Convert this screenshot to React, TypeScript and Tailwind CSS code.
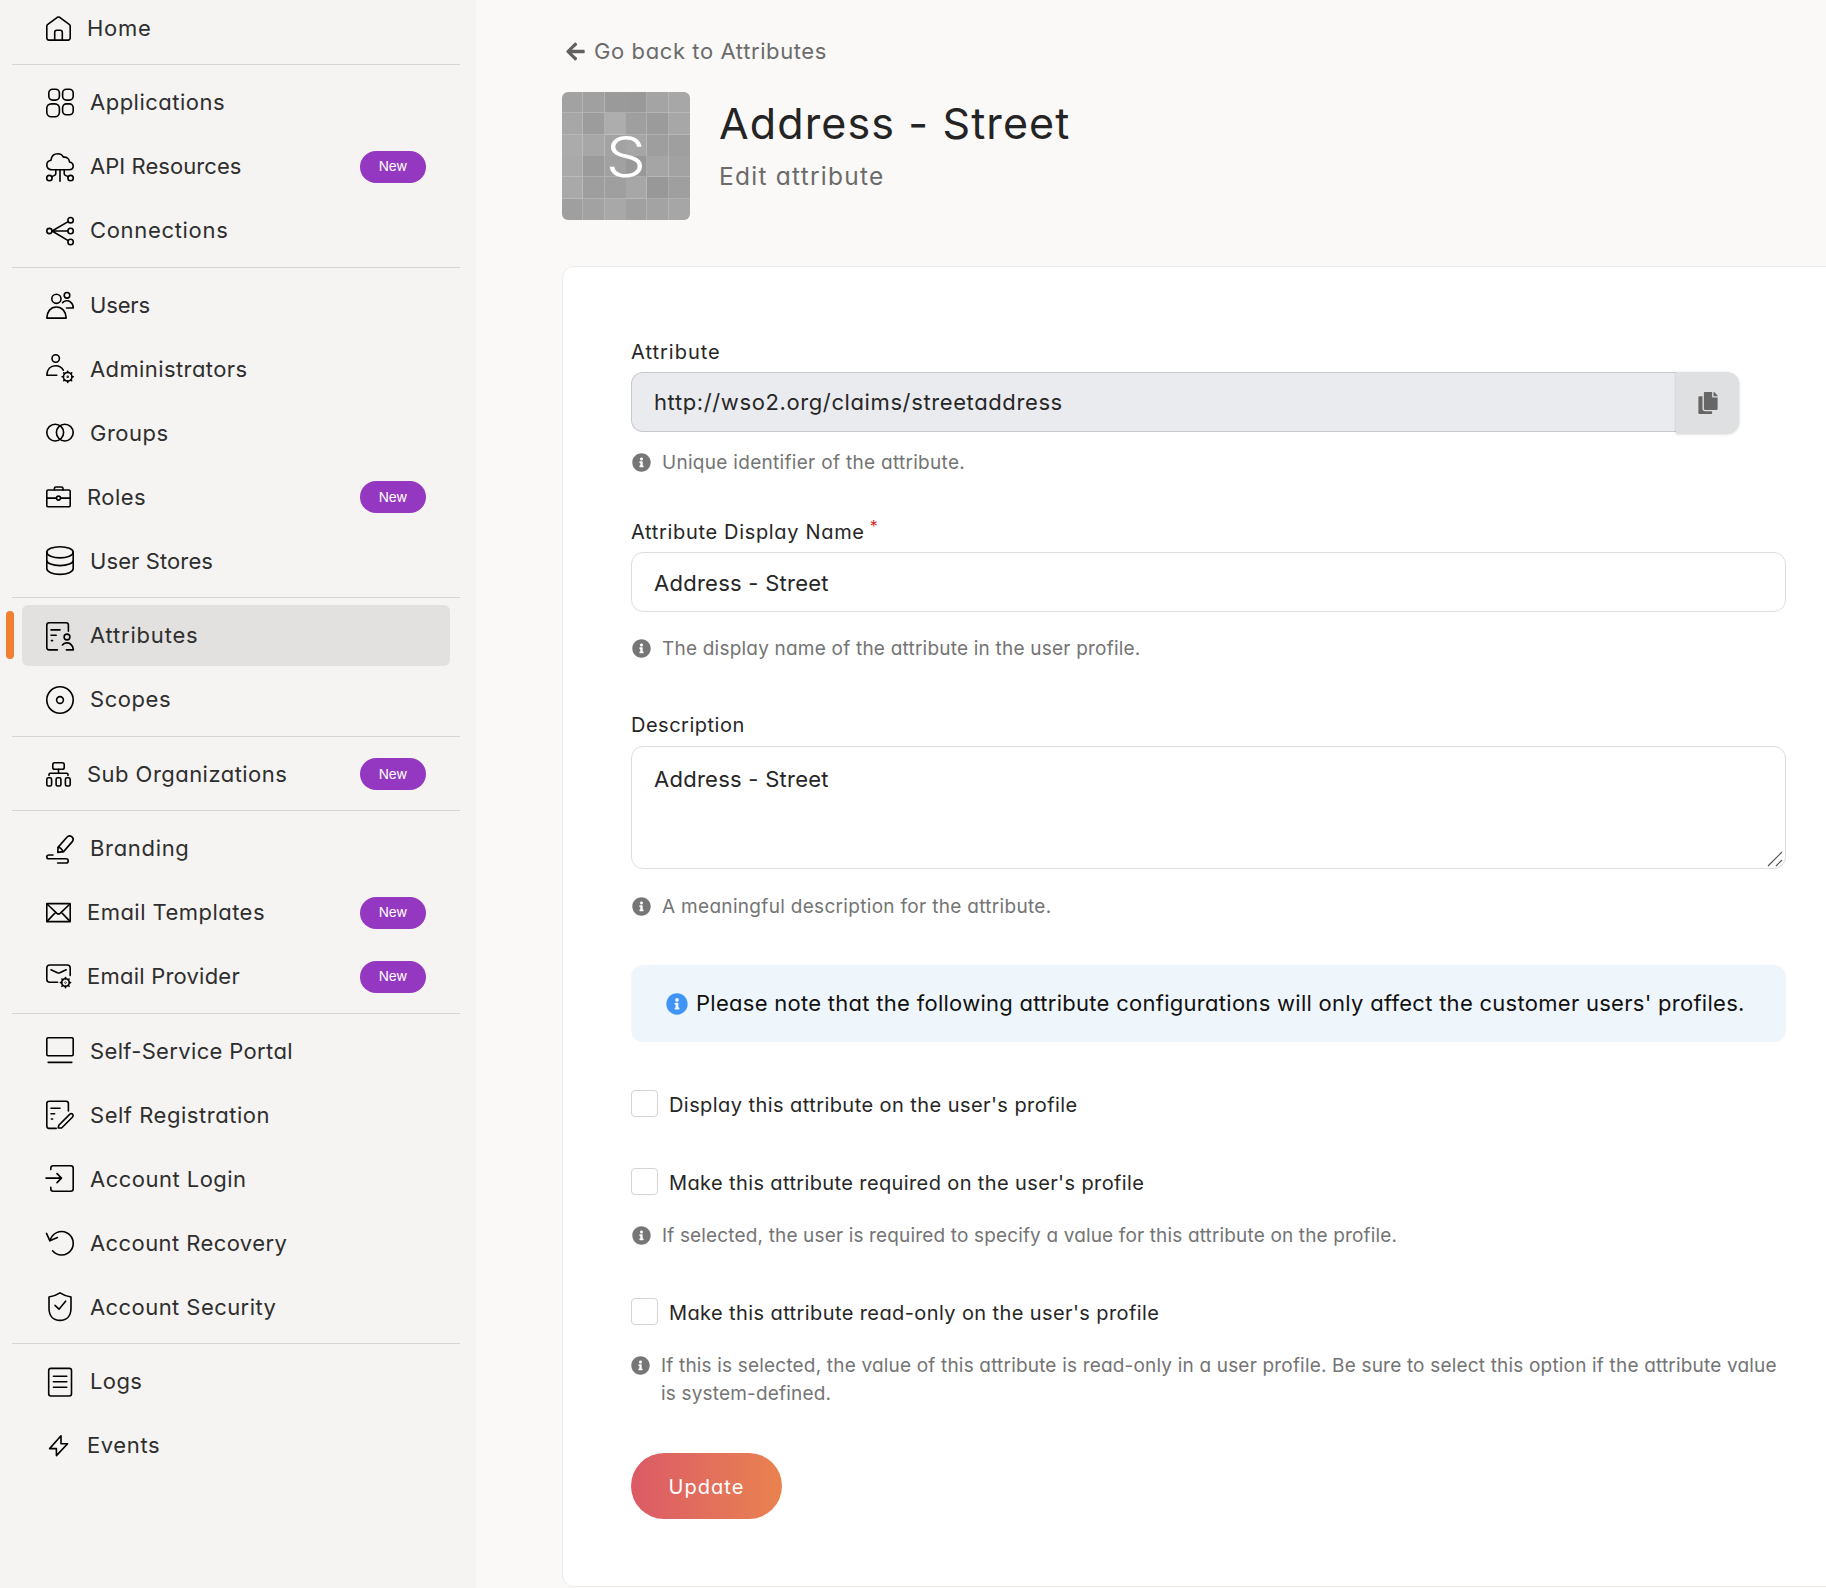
import React from "react";
import { FaArrowLeft, FaCopy, FaInfoCircle } from "react-icons/fa";

const gearTeeth = (cx: number, cy: number, r: number) =>
  [0, 45, 90, 135, 180, 225, 270, 315].map((a) => {
    const c = Math.cos((a * Math.PI) / 180);
    const s = Math.sin((a * Math.PI) / 180);
    return <path key={a} d={`M${cx + c * r} ${cy + s * r}L${cx + c * (r + 1.3)} ${cy + s * (r + 1.3)}`} />;
  });

const icons: Record<string, React.ReactNode> = {
  home: (
    <>
      <path d="M.8 10.2Q.8 9 1.8 8.3L11.3 1.3Q12.5.6 13.7 1.3L23.2 8.3Q24.2 9 24.2 10.2V21.8Q24.2 24.1 21.9 24.1H3.1Q.8 24.1.8 21.8Z" />
      <path d="M8.7 24V16.4Q8.7 14.3 10.8 14.3H14.2Q16.3 14.3 16.3 16.4V24" />
    </>
  ),
  apps: (
    <>
      <rect x="2.8" y=".3" width="10.6" height="10.8" rx="3.8" />
      <rect x="16.6" y=".3" width="10.6" height="10.8" rx="3.8" />
      <rect x=".8" y="14.9" width="12.6" height="12.8" rx="4.4" />
      <rect x="16.6" y="14.9" width="10.6" height="10.8" rx="3.8" />
    </>
  ),
  api: (
    <>
      <path d="M5.6 16.8C2.4 16.8.8 14.6.8 12.1C.8 9.4 2.5 7.6 5 7.2C5.4 3.3 8 .8 11.9.8C14.6.8 16.4 2 17.4 4.2C21 3.8 23.2 5.8 23.5 9C26 9.5 27.2 11 27.2 13C27.2 15.3 25.6 16.8 23 16.8Z" />
      <path d="M14 17V28.2M9.8 17V20.5Q9.8 22 8.4 22.4L6 23.6M18.2 17V20.5Q18.2 22 19.6 22.4L22 23.6" />
      <circle cx="3.4" cy="25.1" r="2.7" />
      <circle cx="24.6" cy="25.1" r="2.7" />
    </>
  ),
  connections: (
    <>
      <circle cx="3.4" cy="14" r="2.6" />
      <circle cx="24.6" cy="3.2" r="2.7" />
      <circle cx="24.6" cy="14" r="2.7" />
      <circle cx="24.6" cy="25" r="2.7" />
      <path d="M6 14H21.8M6.5 13.8L22.2 4.6M6.5 14.3L22.2 23.6" />
    </>
  ),
  users: (
    <>
      <circle cx="10.4" cy="7.8" r="4.6" />
      <path d="M.8 27.1C1 20.6 4.6 16 10.4 16S20 20.6 20.2 27.1Z" />
      <circle cx="21" cy="4.3" r="2.8" />
      <path d="M16.6 11.6C18.5 9.6 22 9 24.3 10.8C26.3 12.3 27.3 14.6 27.3 17H20.5" />
    </>
  ),
  admins: (
    <>
      <circle cx="9.7" cy="3.5" r="3.7" />
      <path d="M10.8 20.2H.8C1 14.6 4.4 10.8 9.6 10.8C13 10.8 15.8 12.3 17.3 15.2" />
      <circle cx="21.7" cy="21.8" r="4.3" />
      {gearTeeth(21.7, 21.8, 4.3)}
      <circle cx="21.7" cy="21.8" r=".4" />
    </>
  ),
  groups: (
    <>
      <circle cx="9.2" cy="13.6" r="8.4" />
      <circle cx="18.8" cy="13.6" r="8.4" />
    </>
  ),
  roles: (
    <>
      <rect x=".8" y="5" width="23.4" height="16.8" rx="1.4" />
      <path d="M8.4 5V3.5Q8.4 2 9.9 2H15.5Q17 2 17 3.5V5M.8 13.1H10.4M14.6 13.1H24.2" />
      <circle cx="12.5" cy="13.1" r="2" />
    </>
  ),
  stores: (
    <>
      <ellipse cx="14" cy="5.3" rx="13.2" ry="5.6" />
      <path d="M.8 5.3V21.6C.8 24.9 6.6 27.4 14 27.4S27.2 24.9 27.2 21.6V5.3M.8 13.2C.8 16.3 6.6 18.6 14 18.6S27.2 16.3 27.2 13.2" />
    </>
  ),
  attributes: (
    <>
      <path d="M22.4 9.2V3Q22.4.7 20.1.7H3.1Q.8.7.8 3V25.6Q.8 27.9 3.1 27.9H11.4" />
      <path d="M5 7.9H14M5 13.2H10.2M5.4 18.6H6.6" />
      <circle cx="21" cy="15" r="2.9" />
      <path d="M16.4 22.9C18.4 20.6 22.2 20.2 24.5 22C26.4 23.5 27.3 25.6 27.4 27.9H20.4" />
    </>
  ),
  scopes: (
    <>
      <circle cx="14" cy="14" r="13.2" />
      <circle cx="14" cy="14" r="3.4" />
    </>
  ),
  suborg: (
    <>
      <rect x="6.8" y=".8" width="11.4" height="6.4" rx="1.8" />
      <path d="M12.5 7.2V11.2M3 13.4V12.4Q3 11.2 4.2 11.2H20.8Q22 11.2 22 12.4V13.4" />
      <rect x=".8" y="15.8" width="4.8" height="8.2" rx="1.6" />
      <rect x="10.1" y="15.8" width="4.8" height="8.2" rx="1.6" />
      <rect x="19.4" y="15.8" width="4.8" height="8.2" rx="1.6" />
    </>
  ),
  branding: (
    <>
      <path d="M12 12.4L20.9 2.2Q23 -.2 25.7 1.6Q28.3 3.6 26.5 6.4L17.6 16.6L11.8 17.4Z" />
      <path d="M12.2 12.6C13.8 12.2 16.6 14.6 16.8 16.6" />
      <path d="M7 20H3Q.8 20 .8 21.9T3 23.8H20Q22.2 23.8 22.2 25.9T20 28H11.6" />
    </>
  ),
  mail: (
    <>
      <rect x=".8" y="3.6" width="23.4" height="18" rx=".4" />
      <path d="M1 4L10.9 13.4Q12.5 14.8 14.1 13.4L24 4M1 21.4L9.6 12.4M24 21.4L15.4 12.4" />
    </>
  ),
  mailgear: (
    <>
      <path d="M11.6 18.2H3.8Q.8 18.2.8 15.2V4Q.8 1 3.8 1H21.2Q24.2 1 24.2 4V11.6" />
      <path d="M5 5.8L11.4 8.8Q12.6 9.3 13.8 8.8L20.2 5.8" />
      <circle cx="19.5" cy="18.6" r="3.8" />
      {gearTeeth(19.5, 18.6, 3.8)}
      <circle cx="19.5" cy="18.6" r=".3" />
    </>
  ),
  portal: (
    <>
      <rect x=".8" y=".8" width="26.4" height="18" rx="1.2" />
      <path d="M2.2 25.4H25.8" />
    </>
  ),
  registration: (
    <>
      <path d="M22.4 10V2.6Q22.4.2 20.1.2H3.1Q.8.2.8 2.5V25.1Q.8 27.4 3.1 27.4H10.2" />
      <path d="M5 7.3H14M5 12.8H8.6M5.4 18H6.6" />
      <path d="M12.8 24.2L23.9 13.1Q25.2 12 26.6 13.2Q27.8 14.6 26.6 16L15.6 27H12.2Z" />
    </>
  ),
  login: (
    <>
      <path d="M4.8 4.6V3.2Q4.8.8 7.2.8H24.8Q27.2.8 27.2 3.2V23.8Q27.2 26.2 24.8 26.2H7.2Q4.8 26.2 4.8 23.8V22.2" />
      <path d="M0 13.1H15.4M11 8.6L15.5 13.1L11 17.6" />
    </>
  ),
  recovery: (
    <>
      <path d="M6.6 21.8A11.7 11.7 0 1 0 4.2 11.4" />
      <path d="M.5 4.4L3.9 11.8L11.4 8.6" />
    </>
  ),
  security: (
    <>
      <path d="M14 -.2Q19 3 25 4V15C25 23 20.6 27.4 14 27.4S3 23 3 15V4Q9 3 14 -.2Z" />
      <path d="M9 12.4L13 16.2L19.6 8.2" />
    </>
  ),
  logs: (
    <>
      <rect x="2.7" y=".4" width="22.8" height="27.6" rx="2.2" />
      <path d="M7.4 8.3H20.8M7.4 13.8H20.8M7.4 19.2H20.8" />
    </>
  ),
  events: <path d="M15 2.8L3.6 15.6H10.4V22.6L21.6 10.8H15Z" />,
};

type Item = { icon: string; label: string; track: string; small?: boolean; isNew?: boolean; active?: boolean };

const sections: Item[][] = [
  [{ icon: "home", label: "Home", track: "tracking-[0.7px]", small: true }],
  [
    { icon: "apps", label: "Applications", track: "tracking-[0.5px]" },
    { icon: "api", label: "API Resources", track: "tracking-[0.06px]", isNew: true },
    { icon: "connections", label: "Connections", track: "tracking-[0.68px]" },
  ],
  [
    { icon: "users", label: "Users", track: "tracking-[-0.15px]" },
    { icon: "admins", label: "Administrators", track: "tracking-[0.4px]" },
    { icon: "groups", label: "Groups", track: "tracking-[0.5px]" },
    { icon: "roles", label: "Roles", track: "tracking-[0.45px]", small: true, isNew: true },
    { icon: "stores", label: "User Stores", track: "tracking-[0.1px]" },
  ],
  [
    { icon: "attributes", label: "Attributes", track: "tracking-[0.8px]", active: true },
    { icon: "scopes", label: "Scopes", track: "tracking-[0.55px]" },
  ],
  [{ icon: "suborg", label: "Sub Organizations", track: "tracking-[0.46px]", small: true, isNew: true }],
  [
    { icon: "branding", label: "Branding", track: "tracking-[0.68px]" },
    { icon: "mail", label: "Email Templates", track: "tracking-[0.46px]", small: true, isNew: true },
    { icon: "mailgear", label: "Email Provider", track: "tracking-[0.22px]", small: true, isNew: true },
  ],
  [
    { icon: "portal", label: "Self-Service Portal", track: "tracking-[0.35px]" },
    { icon: "registration", label: "Self Registration", track: "tracking-[0.53px]" },
    { icon: "login", label: "Account Login", track: "tracking-[0.48px]" },
    { icon: "recovery", label: "Account Recovery", track: "tracking-[0.41px]" },
    { icon: "security", label: "Account Security", track: "tracking-[0.43px]" },
  ],
  [
    { icon: "logs", label: "Logs", track: "tracking-[0.4px]" },
    { icon: "events", label: "Events", track: "tracking-[0.6px]", small: true },
  ],
];

function NavItem({ item }: { item: Item }) {
  return (
    <div
      className={
        "relative ml-[22px] mb-[3px] flex h-[61px] w-[428px] items-center rounded-md pl-6 pr-6 " +
        (item.active ? "bg-[#e2e1df]" : "")
      }
    >
      {item.active && <span className="absolute -left-4 top-1.5 h-12 w-2 rounded-full bg-[#f07f32]" />}
      <svg
        className={"shrink-0 overflow-visible " + (item.small ? "size-[25px]" : "size-7")}
        viewBox={item.small ? "0 0 25 25" : "0 0 28 28"}
        fill="none"
        stroke="#000"
        strokeWidth="1.6"
        strokeLinecap="round"
        strokeLinejoin="round"
      >
        {icons[item.icon]}
      </svg>
      <span className={"ml-4 whitespace-nowrap text-[22px] text-[#2e2e2e] " + item.track}>{item.label}</span>
      {item.isNew && (
        <span className="ml-auto flex h-8 w-[66px] items-center justify-center rounded-full bg-[#9538c1] text-[13.5px] tracking-[-0.1px] text-white">
          New
        </span>
      )}
    </div>
  );
}

function Label({ children, className = "" }: { children: React.ReactNode; className?: string }) {
  return <div className={"flex text-xl leading-6 text-[#262626] " + className}>{children}</div>;
}

function Hint({ children, className = "" }: { children: React.ReactNode; className?: string }) {
  return (
    <div className={"flex text-[19px] leading-7 text-[#747474] " + className}>
      <FaInfoCircle className="mt-[4px] size-[19px] shrink-0 text-[#767676]" />
      <span className="ml-[11px] whitespace-nowrap">{children}</span>
    </div>
  );
}

function Check({ children, className = "" }: { children: React.ReactNode; className?: string }) {
  return (
    <div className={"flex h-[27px] " + className}>
      <span className="size-[27px] shrink-0 rounded-[4px] border border-[#d4d4d5] bg-white" />
      <span className="ml-[11px] mt-[3px] whitespace-nowrap text-xl leading-6 text-[#262626]">{children}</span>
    </div>
  );
}

const shades = [
  "#a2a2a2", "#a0a0a0", "#9a9a9a", "#999999", "#a4a4a4", "#a7a7a7",
  "#a7a7a7", "#9c9c9c", "#adadad", "#9f9f9f", "#9b9b9b", "#a7a7a7",
  "#ababab", "#a7a7a7", "#a3a3a3", "#a6a6a6", "#9e9e9e", "#9f9f9f",
  "#a9a9a9", "#9b9b9b", "#a1a1a1", "#989898", "#a5a5a5", "#a2a2a2",
  "#a9a9a9", "#9e9e9e", "#9f9f9f", "#a7a7a7", "#989898", "#9f9f9f",
  "#9f9f9f", "#a2a2a2", "#a8a8a8", "#a0a0a0", "#a3a3a3", "#a6a6a6",
];

export default function App() {
  return (
    <div className="flex h-[1588px] w-[1826px] overflow-hidden bg-[#faf9f7] font-['Inter',sans-serif] [font-feature-settings:'cv11']">
      <nav className="w-[476px] shrink-0 bg-[#f5f4f2]">
        {sections.map((items, i) => (
          <div key={i} className={"pb-[2.5px] " + (i === 0 ? "-mt-[2.5px]" : "")}>
            {i > 0 && <div className="mb-[7px] ml-3 h-px w-[448px] bg-[#d8d6d4]" />}
            {items.map((item) => (
              <NavItem key={item.label} item={item} />
            ))}
          </div>
        ))}
      </nav>
      <main className="min-w-0 flex-1 pl-[86px] pt-[37px]">
        <div className="flex h-7 items-center pl-[3px] text-[22px] leading-7 text-[#6b6b6b]">
          <FaArrowLeft className="size-[21px] text-[#606060]" />
          <span className="ml-2 tracking-[0.6px]">Go back to Attributes</span>
        </div>
        <div className="mt-[27px] flex">
          <div className="relative size-32 overflow-hidden rounded-md">
            <div className="grid size-full grid-cols-6 grid-rows-6">
              {shades.map((s, i) => (
                <span
                  key={i}
                  className={
                    "border-white/20 " +
                    (i % 6 === 2 || i % 6 === 5 ? "" : "border-r ") +
                    (Math.floor(i / 6) === 2 || Math.floor(i / 6) === 5 ? "" : "border-b")
                  }
                  style={{ backgroundColor: s }}
                />
              ))}
            </div>
            <span className="absolute inset-0 flex scale-x-[1.14] items-center justify-center pt-0.5 text-[56px] font-light text-white">
              S
            </span>
          </div>
          <div className="ml-[29px] pt-[5px]">
            <h1 className="text-[43px] leading-[52px] tracking-[1.12px] text-[#242424]">Address - Street</h1>
            <p className="mt-[11px] text-[24.5px] leading-8 tracking-[1.25px] text-[#6b6b6b]">Edit attribute</p>
          </div>
        </div>
        <section className="mt-[46px] h-[1321px] w-[1300px] rounded-xl border border-[#ebebeb] bg-white pl-[68px] pt-[73px]">
          <div className="w-[1155px]">
            <Label className="tracking-[1px]">Attribute</Label>
            <div className="mt-2 flex h-[60px] w-[1108px]">
              <div className="flex flex-1 items-center rounded-l-xl border border-r-0 border-[#c8c9cc] bg-[#eaebef] pl-[22px] text-[22px] tracking-[0.61px] text-[#262626]">
                http://wso2.org/claims/streetaddress
              </div>
              <button className="flex h-[61px] w-[63px] items-center justify-center rounded-r-xl bg-[#dfe0e1] text-[#666] shadow-[0_1px_3px_rgba(0,0,0,0.2)]">
                <FaCopy className="size-[22px]" />
              </button>
            </div>
            <Hint className="mt-[17px] pl-px tracking-[0.3px]">Unique identifier of the attribute.</Hint>
            <Label className="mt-[43px] tracking-[0.67px]">
              Attribute Display Name
              <span className="ml-[5px] -mt-1.5 text-base text-[#db2828]">*</span>
            </Label>
            <div className="mt-2 flex h-[60px] items-center rounded-xl border border-[#dededf] pl-[22px] pt-0.5 text-[22px] tracking-[0.26px] text-[#262626]">
              Address - Street
            </div>
            <Hint className="mt-[23px] pl-px tracking-[0.21px]">The display name of the attribute in the user profile.</Hint>
            <Label className="mt-[50px] tracking-[0.5px]">Description</Label>
            <div className="relative mt-[9px] h-[123px] rounded-xl border border-[#dededf] pl-[22px] pt-[18px] text-[22px] leading-7 tracking-[0.26px] text-[#262626]">
              Address - Street
              <svg className="absolute bottom-px right-0.5 size-4" viewBox="0 0 16 16" stroke="#555" strokeWidth="1.2">
                <path d="M1 15L15 1M9 15L15 9" />
              </svg>
            </div>
            <Hint className="mt-[24px] pl-px tracking-[0.31px]">A meaningful description for the attribute.</Hint>
            <div className="mt-[44px] flex h-[77px] items-center rounded-xl bg-[#eff6fb] pl-[35px] text-[22px] text-[#111]">
              <FaInfoCircle className="size-[22px] text-[#4194f7]" />
              <span className="ml-2 whitespace-nowrap tracking-[0.28px]">
                Please note that the following attribute configurations will only affect the customer users' profiles.
              </span>
            </div>
            <Check className="mt-12 tracking-[0.43px]">Display this attribute on the user's profile</Check>
            <Check className="mt-[51px] tracking-[0.38px]">Make this attribute required on the user's profile</Check>
            <Hint className="mt-[27px] pl-px tracking-[0.15px]">
              If selected, the user is required to specify a value for this attribute on the profile.
            </Hint>
            <Check className="mt-[48px] tracking-[0.4px]">Make this attribute read-only on the user's profile</Check>
            <Hint className="mt-[27px] tracking-[0.18px]">
              If this is selected, the value of this attribute is read-only in a user profile. Be sure to select this option if the attribute value
              <br />
              is system-defined.
            </Hint>
            <button className="mt-[45px] flex h-[66px] w-[151px] items-center justify-center rounded-full bg-gradient-to-r from-[#db5a66] to-[#e9824e] pt-0.5 text-xl tracking-[1.05px] text-white">
              Update
            </button>
          </div>
        </section>
      </main>
    </div>
  );
}
